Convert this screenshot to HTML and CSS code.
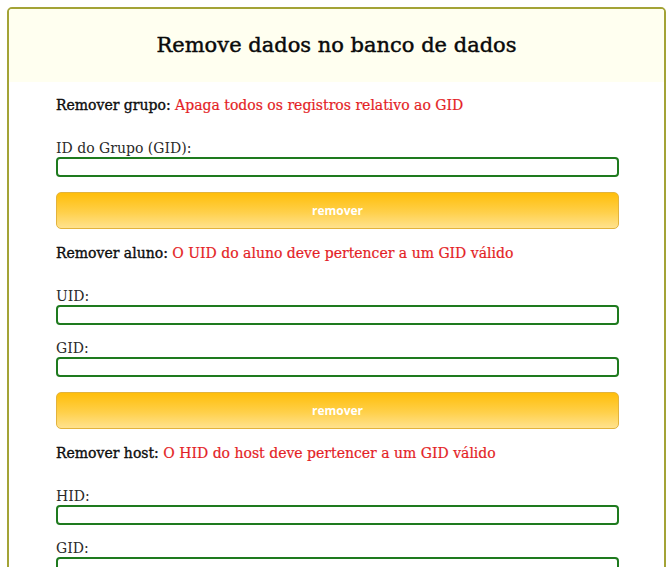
FILE: index.html
```html
<!DOCTYPE html>
<html lang="pt">
<head>
<meta charset="utf-8">
<title>Remove dados</title>
<link rel="stylesheet" href="styles.css">
</head>
<body>
<div class="card">
  <div class="card-header">
    <h1 class="title">Remove dados no banco de dados</h1>
  </div>
  <div class="card-body">
    <form class="section">
      <p class="heading">Remover grupo: <span class="warn">Apaga todos os registros relativo ao GID</span></p>
      <label class="label">ID do Grupo (GID):</label>
      <input class="field" type="text">
      <button class="btn" type="button">remover</button>
    </form>
    <form class="section">
      <p class="heading">Remover aluno: <span class="warn">O UID do aluno deve pertencer a um GID válido</span></p>
      <label class="label">UID:</label>
      <input class="field" type="text">
      <label class="label label-next">GID:</label>
      <input class="field" type="text">
      <button class="btn" type="button">remover</button>
    </form>
    <form class="section">
      <p class="heading">Remover host: <span class="warn">O HID do host deve pertencer a um GID válido</span></p>
      <label class="label">HID:</label>
      <input class="field" type="text">
      <label class="label label-next">GID:</label>
      <input class="field" type="text">
      <button class="btn" type="button">remover</button>
    </form>
  </div>
</div>
</body>
</html>
```
FILE: styles.css
```css
html, body {
  margin: 0;
  padding: 0;
  background: #ffffff;
}
body {
  font-family: "DejaVu Serif", "Liberation Serif", serif;
  color: #222;
}
.card {
  margin: 7px 2px 0 7px;
  border: 2px solid #a3a336;
  border-radius: 5px;
  overflow: hidden;
  background: #fff;
}
.card-header {
  background: #fffff0;
  height: 73px;
  display: flex;
  align-items: center;
  justify-content: center;
}
.title {
  margin: 0;
  font-size: 21px;
  font-weight: normal;
  color: #0a0a0a;
  padding-bottom: 1px;
  -webkit-text-stroke: 0.45px #0a0a0a;
}
.card-body {
  padding: 0 45px 40px 47px;
  display: flex;
  flex-direction: column;
}
.section {
  display: flex;
  flex-direction: column;
  margin: 0;
}
.heading {
  margin: 13px 0 0 0;
  font-size: 14px;
  line-height: 20px;
  color: #0d0d0d;
  -webkit-text-stroke: 0.35px #0d0d0d;
}
.warn {
  color: #e41e26;
  -webkit-text-stroke: 0.2px #e41e26;
}
.label {
  display: block;
  margin-top: 24px;
  font-size: 14px;
  line-height: 18px;
  color: #2a2a2a;
}
.label-next {
  margin-top: 14px;
}
.field {
  display: block;
  box-sizing: border-box;
  width: 100%;
  height: 20px;
  margin: 0;
  border: 2px solid #1e7a1e;
  border-radius: 4px;
  background: #fff;
  padding: 0 4px;
}
.btn {
  display: block;
  box-sizing: border-box;
  width: 100%;
  height: 37px;
  margin-top: 15px;
  margin-bottom: 1px;
  border: 1px solid #e3b33c;
  border-radius: 5px;
  background: linear-gradient(to bottom, #ffbe0a 0%, #ffd04a 55%, #ffe28e 100%);
  color: #fff;
  font-family: "Open Sans", "Liberation Sans", sans-serif;
  font-weight: bold;
  font-size: 12px;
}
```
